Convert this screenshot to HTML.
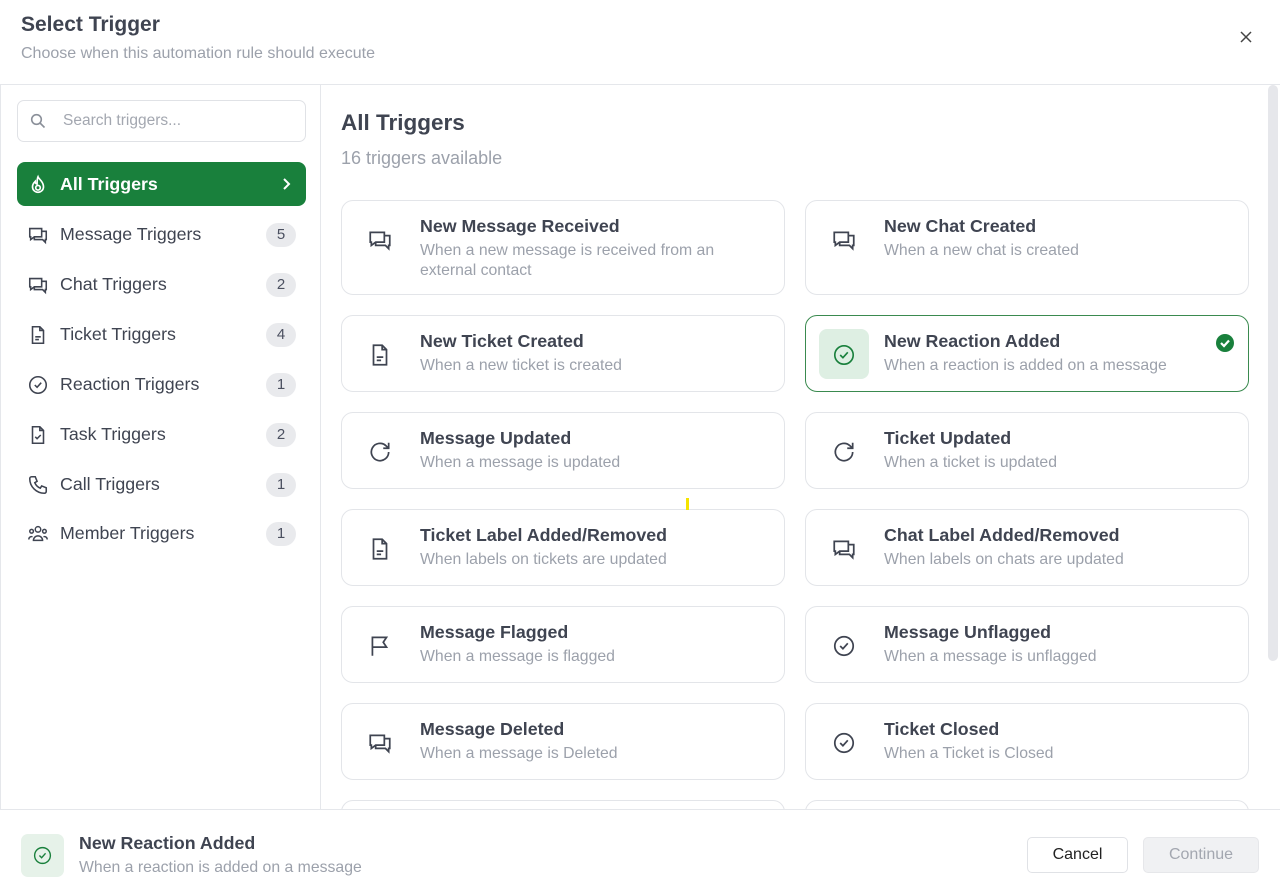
<!DOCTYPE html>
<html><head><meta charset="utf-8"><style>
*{box-sizing:border-box;margin:0;padding:0}
body{width:1280px;height:886px;overflow:hidden;background:#fff;font-family:"Liberation Sans",sans-serif;color:#3f4451;position:relative}
.hdr{position:absolute;left:0;top:0;width:1280px;height:85px;border-bottom:1px solid #e5e7eb}
.hdr h1{position:absolute;left:21px;top:13px;font-size:21px;font-weight:600;color:#3f4451}
.hdr p{position:absolute;left:21px;top:45px;font-size:16px;color:#9ca1ab}
.side{position:absolute;left:0;top:85px;width:321px;height:724px;border-right:1px solid #e5e7eb;border-left:1px solid #e5e7eb}
.search{position:absolute;left:16px;top:15px;width:289px;height:42px;border:1px solid #e0e2e6;border-radius:7px}
.search span{position:absolute;left:45px;top:11px;font-size:15.5px;color:#a3a7b0}
.search svg{position:absolute;left:12px;top:12px}
.item{position:absolute;left:16px;width:289px;height:44px;border-radius:8px;font-size:17.8px}
.item svg{position:absolute;left:10px;top:12px}
.item .t{position:absolute;left:43px;top:12px}
.item .b{position:absolute;right:10px;top:11px;width:30px;height:24px;border-radius:12px;background:#e9eaed;font-size:15px;text-align:center;line-height:24px;color:#4b5060}
.act{background:#19803c;color:#fff;font-weight:700}
.main{position:absolute;left:321px;top:85px;width:947px;height:724px;overflow:hidden}
.main h2{position:absolute;left:20px;top:25px;font-size:22.5px;font-weight:600;color:#3f4451}
.main .sub{position:absolute;left:20px;top:63px;font-size:18px;color:#9ca1ab}
.card{position:absolute;width:444px;border:1px solid #e3e5e9;border-radius:12px;background:#fff}
.card svg{position:absolute;left:25px}
.card .ti{position:absolute;left:78px;top:15px;font-size:17.8px;font-weight:600;color:#3f4451}
.card .de{position:absolute;left:78px;top:40px;font-size:15.8px;color:#9ca1ab;line-height:20px;width:320px}
.sel{border-color:#3a8a4f}
.scroll{position:absolute;left:1268px;top:85px;width:10px;height:576px;background:#e6e7eb;border-radius:5px}
.foot{position:absolute;left:0;top:809px;width:1280px;height:77px;border-top:1px solid #e5e7eb;background:#fff}
.btn{position:absolute;top:27px;height:36px;border-radius:5px;font-size:16px;text-align:center;line-height:34px}
</style></head><body>
<div class="hdr"><h1>Select Trigger</h1><p>Choose when this automation rule should execute</p>
<svg width="12" height="12" viewBox="0 0 12 12" style="position:absolute;left:1240px;top:31px"><path d="M1 1L11 11M11 1L1 11" stroke="#444" stroke-width="1.5"/></svg></div>
<div class="side">
<div class="search"><svg width="16" height="16" viewBox="0 0 16 16" fill="none" stroke="#8a8f99" stroke-width="1.6"><circle cx="6.5" cy="6.5" r="4.8"/><path d="M10 10l4.5 4.5"/></svg><span>Search triggers...</span></div>
<div class="item act" style="top:77px"><svg width="22" height="22" viewBox="0 0 24 24" fill="none" stroke="#fff" stroke-width="1.8"><path d="M12 3c1 3 6 5 6 11a6 6 0 0 1-12 0c0-3 2-5 3-6 0 2 1 3 2 3 0-3 0-6 1-8z"/><circle cx="12" cy="15" r="2.5"/></svg><span class="t">All Triggers</span><svg width="14" height="14" viewBox="0 0 14 14" style="left:262px;top:15px" fill="none" stroke="#fff" stroke-width="2"><path d="M5 2l5 5-5 5"/></svg></div>
<div class="item" style="top:127px"><svg width="22" height="22" viewBox="0 0 24 24" fill="none" stroke="#3f4451" stroke-width="1.7"><path d="M3 5h13v9H8l-4 3v-3H3z"/><path d="M8 14v3h9l3 3v-3h1V8h-5"/></svg><span class="t">Message Triggers</span><span class="b">5</span></div>
<div class="item" style="top:177px"><svg width="22" height="22" viewBox="0 0 24 24" fill="none" stroke="#3f4451" stroke-width="1.7"><path d="M3 5h13v9H8l-4 3v-3H3z"/><path d="M8 14v3h9l3 3v-3h1V8h-5"/></svg><span class="t">Chat Triggers</span><span class="b">2</span></div>
<div class="item" style="top:227px"><svg width="22" height="22" viewBox="0 0 24 24" fill="none" stroke="#3f4451" stroke-width="1.7"><path d="M6 3h8l4 4v14H6z"/><path d="M14 3v4h4M9 14h6M9 17h4"/></svg><span class="t">Ticket Triggers</span><span class="b">4</span></div>
<div class="item" style="top:277px"><svg width="22" height="22" viewBox="0 0 24 24" fill="none" stroke="#3f4451" stroke-width="1.7"><circle cx="12" cy="12" r="9"/><path d="M8.5 12l2.5 2.5 4.5-5"/></svg><span class="t">Reaction Triggers</span><span class="b">1</span></div>
<div class="item" style="top:327px"><svg width="22" height="22" viewBox="0 0 24 24" fill="none" stroke="#3f4451" stroke-width="1.7"><path d="M6 3h8l4 4v14H6z"/><path d="M14 3v4h4M9 14l2 2 4-4"/></svg><span class="t">Task Triggers</span><span class="b">2</span></div>
<div class="item" style="top:377px"><svg width="22" height="22" viewBox="0 0 24 24" fill="none" stroke="#3f4451" stroke-width="1.7"><path d="M5 3h4l2 5-2.5 1.5a11 11 0 0 0 6 6L16 13l5 2v4a2 2 0 0 1-2 2A16 16 0 0 1 3 5a2 2 0 0 1 2-2"/></svg><span class="t">Call Triggers</span><span class="b">1</span></div>
<div class="item" style="top:426px"><svg width="22" height="22" viewBox="0 0 24 24" fill="none" stroke="#3f4451" stroke-width="1.6"><circle cx="12" cy="7" r="3"/><circle cx="5" cy="9" r="2"/><circle cx="19" cy="9" r="2"/><path d="M7 19a5 5 0 0 1 10 0zM2 18a3 3 0 0 1 4-3M22 18a3 3 0 0 0-4-3"/></svg><span class="t">Member Triggers</span><span class="b">1</span></div>
</div>
<div class="main">
<h2>All Triggers</h2><div class="sub">16 triggers available</div>
<div class="card" style="left:20px;top:115px;height:95px"><svg style="top:26px" width="26" height="26" viewBox="0 0 24 24" fill="none" stroke="#3f4451" stroke-width="1.6"><path d="M3 5h13v9H8l-4 3v-3H3z"/><path d="M8 14v3h9l3 3v-3h1V8h-5"/></svg><div class="ti">New Message Received</div><div class="de">When a new message is received from an external contact</div></div>
<div class="card" style="left:484px;top:115px;height:95px"><svg style="top:26px" width="26" height="26" viewBox="0 0 24 24" fill="none" stroke="#3f4451" stroke-width="1.6"><path d="M3 5h13v9H8l-4 3v-3H3z"/><path d="M8 14v3h9l3 3v-3h1V8h-5"/></svg><div class="ti">New Chat Created</div><div class="de">When a new chat is created</div></div>
<div class="card" style="left:20px;top:230px;height:77px"><svg style="top:26px" width="26" height="26" viewBox="0 0 24 24" fill="none" stroke="#3f4451" stroke-width="1.6"><path d="M6 3h8l4 4v14H6z"/><path d="M14 3v4h4M9 14h6M9 17h4"/></svg><div class="ti">New Ticket Created</div><div class="de">When a new ticket is created</div></div>
<div class="card sel" style="left:484px;top:230px;height:77px"><div style="position:absolute;left:13px;top:13px;width:50px;height:50px;border-radius:8px;background:#deefe3"></div><svg style="top:26px;left:25px" width="26" height="26" viewBox="0 0 24 24" fill="none" stroke="#19803c" stroke-width="1.5"><circle cx="12" cy="12" r="8.5"/><path d="M8.5 12l2.5 2.5 4.5-5"/></svg><div class="ti">New Reaction Added</div><div class="de">When a reaction is added on a message</div><svg style="left:409px;top:17px" width="20" height="20" viewBox="0 0 20 20"><circle cx="10" cy="10" r="9" fill="#19803c"/><path d="M6 10l3 3 5-5.5" fill="none" stroke="#fff" stroke-width="2.2"/></svg></div>
<div class="card" style="left:20px;top:327px;height:77px"><svg style="top:26px" width="26" height="26" viewBox="0 0 24 24" fill="none" stroke="#3f4451" stroke-width="1.6"><path d="M20 12a8 8 0 1 1-2.5-5.8L20 8.5M20 3.5v5h-5"/></svg><div class="ti">Message Updated</div><div class="de">When a message is updated</div></div>
<div class="card" style="left:484px;top:327px;height:77px"><svg style="top:26px" width="26" height="26" viewBox="0 0 24 24" fill="none" stroke="#3f4451" stroke-width="1.6"><path d="M20 12a8 8 0 1 1-2.5-5.8L20 8.5M20 3.5v5h-5"/></svg><div class="ti">Ticket Updated</div><div class="de">When a ticket is updated</div></div>
<div class="card" style="left:20px;top:424px;height:77px"><svg style="top:26px" width="26" height="26" viewBox="0 0 24 24" fill="none" stroke="#3f4451" stroke-width="1.6"><path d="M6 3h8l4 4v14H6z"/><path d="M14 3v4h4M9 14h6M9 17h4"/></svg><div class="ti">Ticket Label Added/Removed</div><div class="de">When labels on tickets are updated</div></div>
<div class="card" style="left:484px;top:424px;height:77px"><svg style="top:26px" width="26" height="26" viewBox="0 0 24 24" fill="none" stroke="#3f4451" stroke-width="1.6"><path d="M3 5h13v9H8l-4 3v-3H3z"/><path d="M8 14v3h9l3 3v-3h1V8h-5"/></svg><div class="ti">Chat Label Added/Removed</div><div class="de">When labels on chats are updated</div></div>
<div class="card" style="left:20px;top:521px;height:77px"><svg style="top:26px" width="26" height="26" viewBox="0 0 24 24" fill="none" stroke="#3f4451" stroke-width="1.6"><path d="M5 21V4h13l-3 4.5 3 4.5H5"/></svg><div class="ti">Message Flagged</div><div class="de">When a message is flagged</div></div>
<div class="card" style="left:484px;top:521px;height:77px"><svg style="top:26px" width="26" height="26" viewBox="0 0 24 24" fill="none" stroke="#3f4451" stroke-width="1.6"><circle cx="12" cy="12" r="8.5"/><path d="M8.5 12l2.5 2.5 4.5-5"/></svg><div class="ti">Message Unflagged</div><div class="de">When a message is unflagged</div></div>
<div class="card" style="left:20px;top:618px;height:77px"><svg style="top:26px" width="26" height="26" viewBox="0 0 24 24" fill="none" stroke="#3f4451" stroke-width="1.6"><path d="M3 5h13v9H8l-4 3v-3H3z"/><path d="M8 14v3h9l3 3v-3h1V8h-5"/></svg><div class="ti">Message Deleted</div><div class="de">When a message is Deleted</div></div>
<div class="card" style="left:484px;top:618px;height:77px"><svg style="top:26px" width="26" height="26" viewBox="0 0 24 24" fill="none" stroke="#3f4451" stroke-width="1.6"><circle cx="12" cy="12" r="8.5"/><path d="M8.5 12l2.5 2.5 4.5-5"/></svg><div class="ti">Ticket Closed</div><div class="de">When a Ticket is Closed</div></div>
<div class="card" style="left:20px;top:715px;height:77px"></div>
<div class="card" style="left:484px;top:715px;height:77px"></div>
<div style="position:absolute;left:365px;top:413px;width:3px;height:12px;background:#f5e400"></div>
</div>
<div class="scroll"></div>
<div class="foot">
<div style="position:absolute;left:21px;top:24px;width:43px;height:43px;border-radius:7px;background:#e6f2e9"></div>
<svg style="position:absolute;left:32px;top:35px" width="21" height="21" viewBox="0 0 24 24" fill="none" stroke="#19803c" stroke-width="1.6"><circle cx="12" cy="12" r="9"/><path d="M8.5 12l2.5 2.5 4.5-5"/></svg>
<div style="position:absolute;left:79px;top:23px;font-size:17.8px;font-weight:600;color:#3f4451">New Reaction Added</div>
<div style="position:absolute;left:79px;top:49px;font-size:15.8px;color:#9ca1ab">When a reaction is added on a message</div>
<div class="btn" style="left:1027px;width:101px;border:1px solid #e0e2e6;color:#222">Cancel</div>
<div class="btn" style="left:1143px;width:116px;background:#f0f1f3;border:1px solid #e6e7ea;color:#a3a7b0">Continue</div>
</div>
</body></html>
